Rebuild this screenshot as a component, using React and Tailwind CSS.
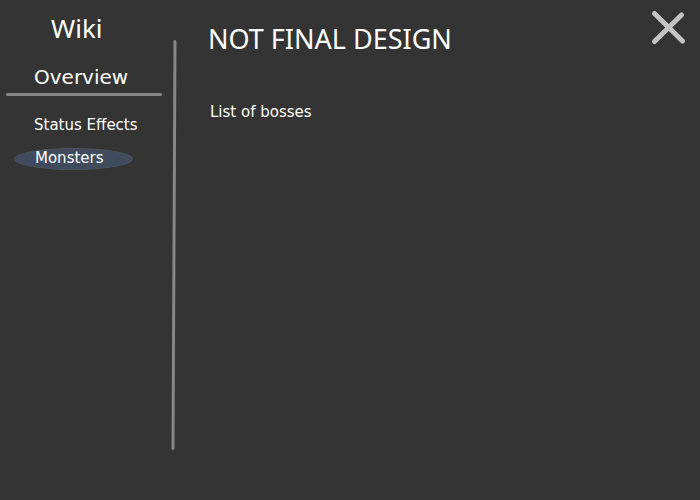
const topics = [
  { name: "Status Effects", selected: false },
  { name: "Monsters", selected: true },
];

function Sidebar() {
  return (
    <nav aria-label="Wiki" className="w-[168px] shrink-0 pt-3">
      <h1 className="pl-[51px] text-[26px] leading-8">Wiki</h1>
      <h2 className="pt-[19px] pl-[34px] font-['DejaVu_Sans',sans-serif] text-[20px] leading-7">
        Overview
      </h2>
      <div className="mt-0.5 mr-1.5 ml-1.5 h-[3px] rounded-full bg-[#878787]" />
      <ul className="mt-[18px] flex flex-col gap-3 font-['DejaVu_Sans',sans-serif] text-[15px]">
        {topics.map((topic) => (
          <li key={topic.name}>
            <button
              type="button"
              aria-current={topic.selected ? "page" : undefined}
              className={
                topic.selected
                  ? "ml-3.5 block h-[22px] w-[119px] rounded-[50%] border border-[#48525f] bg-[#404c5e] pb-0.5 pl-5 text-left leading-[18px]"
                  : "ml-3.5 block h-[22px] pl-5 text-left leading-[22px]"
              }
            >
              {topic.name}
            </button>
          </li>
        ))}
      </ul>
    </nav>
  );
}

function Divider() {
  return (
    <svg
      aria-hidden="true"
      viewBox="0 0 12 412"
      preserveAspectRatio="none"
      className="mt-[39px] mb-[49px] w-3 shrink-0"
    >
      <path d="M7 2.5 L5 409.5" stroke="#878787" strokeWidth="3" strokeLinecap="round" />
    </svg>
  );
}

export default function App() {
  return (
    <div className="flex min-h-screen bg-[#343434] font-['Noto_Sans',sans-serif] text-white">
      <Sidebar />
      <Divider />
      <main className="grow pt-[22px] pl-7">
        <h2 className="text-[27px] leading-[34px]">NOT FINAL DESIGN</h2>
        <p className="mt-11 pl-0.5 font-['DejaVu_Sans',sans-serif] text-[15px] leading-6">
          List of bosses
        </p>
      </main>
      <button type="button" aria-label="Close" className="mt-2 mr-3 size-10 shrink-0 self-start">
        <svg viewBox="0 0 40 40" fill="none" className="size-10">
          <path
            d="M6.5 5.5 L34.5 33 M33.5 7 L6.5 33.5"
            stroke="#c4c4c4"
            strokeWidth="5"
            strokeLinecap="round"
          />
        </svg>
      </button>
    </div>
  );
}
